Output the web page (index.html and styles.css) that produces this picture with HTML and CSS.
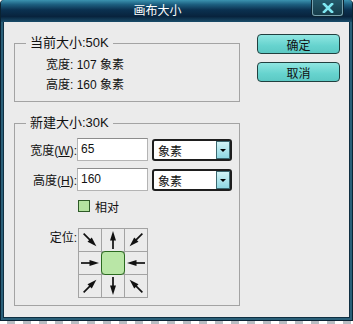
FILE: index.html
```html
<!DOCTYPE html>
<html lang="zh">
<head>
    <meta charset="UTF-8">
    <title>画布大小</title>
    <link rel="stylesheet" href="styles.css">
</head>
<body>
    <svg class="defs" width="0" height="0">
        <defs>
            <g id="arrow">
                <line x1="2" y1="11" x2="13" y2="11" stroke="#111" stroke-width="1.7"/>
                <polygon points="10.5,8 20,11 10.5,14" fill="#111"/>
            </g>
        </defs>
    </svg>

    <div class="window">
        <div class="titlebar">
            <span class="title">画布大小</span>
            <span class="close">
                <svg width="12" height="10" viewBox="0 0 12 10">
                    <path d="M2 1 L10 9 M10 1 L2 9" stroke="#7ee6f0" stroke-width="2.6" stroke-linecap="square"/>
                </svg>
            </span>
        </div>

        <div class="content">
            <div class="main">
                <fieldset class="group current">
                    <legend>当前大小:50K</legend>
                    <div class="line">宽度: 107 象素</div>
                    <div class="line">高度: 160 象素</div>
                </fieldset>

                <fieldset class="group new">
                    <legend>新建大小:30K</legend>
                    <div class="row">
                        <label class="label">宽度(<u>W</u>):</label>
                        <div class="input">65</div>
                        <div class="select">
                            <span class="select-text">象素</span>
                            <span class="drop"><i></i></span>
                        </div>
                    </div>
                    <div class="row second">
                        <label class="label">高度(<u>H</u>):</label>
                        <div class="input">160</div>
                        <div class="select">
                            <span class="select-text">象素</span>
                            <span class="drop"><i></i></span>
                        </div>
                    </div>
                    <div class="check-row">
                        <span class="checkbox"></span>
                        <span>相对</span>
                    </div>
                    <div class="anchor-row">
                        <span class="label">定位:</span>
                        <div class="anchor">
                            <span class="cell"><svg viewBox="0 0 22 22"><use href="#arrow" transform="rotate(45 11 11)"/></svg></span>
                            <span class="cell"><svg viewBox="0 0 22 22"><use href="#arrow" transform="rotate(-90 11 11)"/></svg></span>
                            <span class="cell"><svg viewBox="0 0 22 22"><use href="#arrow" transform="rotate(135 11 11)"/></svg></span>
                            <span class="cell"><svg viewBox="0 0 22 22"><use href="#arrow"/></svg></span>
                            <span class="cell center"><span class="dot"></span></span>
                            <span class="cell"><svg viewBox="0 0 22 22"><use href="#arrow" transform="rotate(180 11 11)"/></svg></span>
                            <span class="cell"><svg viewBox="0 0 22 22"><use href="#arrow" transform="rotate(-45 11 11)"/></svg></span>
                            <span class="cell"><svg viewBox="0 0 22 22"><use href="#arrow" transform="rotate(90 11 11)"/></svg></span>
                            <span class="cell"><svg viewBox="0 0 22 22"><use href="#arrow" transform="rotate(-135 11 11)"/></svg></span>
                        </div>
                    </div>
                </fieldset>
            </div>

            <div class="actions">
                <button class="btn">确定</button>
                <button class="btn">取消</button>
            </div>
        </div>
    </div>
    <div class="checker"></div>
</body>
</html>
```

FILE: styles.css
```css
body {
    margin: 0;
    background: #fff;
    font-family: "Liberation Sans", "Noto Sans CJK SC", sans-serif;
    font-size: 12px;
    color: #111;
}
.defs {
    position: absolute;
}
.window {
    width: 353px;
    height: 321px;
    box-sizing: border-box;
    border: 1px solid #0a2232;
    border-top: none;
    background: #2a5f78;
    border-radius: 4px 4px 0 0;
    display: flex;
    flex-direction: column;
}
.titlebar {
    height: 22px;
    display: flex;
    align-items: flex-start;
    border-radius: 4px 4px 0 0;
    background: linear-gradient(#3b93b0 0%, #1d5f80 20%, #0b3150 45%, #08233d 75%, #1a4d6a 100%);
}
.title {
    flex: 1;
    text-align: center;
    color: #fff;
    font-size: 12px;
    line-height: 22px;
    padding-left: 2px;
}
.close {
    width: 29px;
    height: 15px;
    margin-right: 9px;
    border: 1px solid #78a2ae;
    border-top: none;
    border-radius: 0 0 3px 3px;
    background: linear-gradient(#24596a, #163c4a);
    box-shadow: 0 0 0 1px #0b2430;
    display: flex;
    align-items: center;
    justify-content: center;
}
.content {
    flex: 1;
    margin: 0 2px 2px;
    border: 1px solid #0f2f42;
    border-top: none;
    background: #ebebeb;
    display: flex;
    padding-left: 10px;
}
.main {
    width: 226px;
}
.group {
    margin: 13px 0 0;
    padding: 0;
    min-width: 0;
    border: 1px solid #a3a3a3;
}
.group legend {
    margin-left: 11px;
    padding: 0 4px;
    line-height: 16px;
    font-size: 13px;
}
.current {
    padding: 4px 0 6px;
}
.line {
    line-height: 20px;
    padding-left: 31px;
}
.new {
    padding: 7px 0 7px;
}
.row {
    display: flex;
    align-items: center;
    height: 23px;
}
.row.second {
    margin-top: 7px;
}
.label {
    width: 62px;
    text-align: right;
    flex-shrink: 0;
}
.input {
    width: 71px;
    height: 23px;
    box-sizing: border-box;
    border: 1px solid #b4b4b4;
    border-top-color: #8c8c8c;
    background: #fff;
    padding-left: 3px;
    line-height: 21px;
}
.select {
    width: 80px;
    height: 22px;
    margin-left: 4px;
    margin-top: 1px;
    box-sizing: border-box;
    border: 2px solid #1e1e1e;
    border-radius: 3px;
    background: #fff;
    display: flex;
    align-items: center;
}
.select-text {
    flex: 1;
    padding-left: 4px;
}
.drop {
    width: 14px;
    height: 18px;
    box-sizing: border-box;
    border: 1px solid #3c6870;
    background: linear-gradient(#d2f3f6, #8ed7e2);
    display: flex;
    align-items: center;
    justify-content: center;
}
.drop i {
    border-left: 3px solid transparent;
    border-right: 3px solid transparent;
    border-top: 3px solid #000;
}
.check-row {
    display: flex;
    align-items: center;
    gap: 5px;
    height: 16px;
    margin: 7px 0 0 63px;
}
.checkbox {
    width: 12px;
    height: 12px;
    box-sizing: border-box;
    border: 1px solid #2e5a28;
    background: #b4e3a0;
}
.anchor-row {
    display: flex;
    align-items: flex-start;
    gap: 1px;
    margin-top: 14px;
}
.anchor-row .label {
    line-height: 16px;
    padding-top: 2px;
}
.anchor {
    display: grid;
    grid-template-columns: repeat(3, 22px);
    grid-template-rows: repeat(3, 22px);
    gap: 1px;
    border: 1px solid #a3a3a3;
    background: #a3a3a3;
}
.cell {
    background: #ebebeb;
    display: flex;
}
.cell svg {
    width: 22px;
    height: 22px;
}
.cell.center {
    background: transparent;
}
.dot {
    flex: 1;
    margin: -1px;
    border: 1.5px solid #2b6a20;
    border-radius: 4px;
    background: #b9e6a6;
}
.actions {
    display: flex;
    flex-direction: column;
    gap: 8px;
    margin: 12px 0 0 17px;
}
.btn {
    width: 83px;
    height: 20px;
    padding: 0;
    border: 1px solid #21403f;
    border-radius: 4px;
    background: linear-gradient(#8fe6e1, #66d3ce 60%, #5cc9c4);
    font-family: "Liberation Sans", "Noto Sans CJK SC", sans-serif;
    font-size: 12px;
    color: #111;
}
.checker {
    height: 3px;
    background: repeating-linear-gradient(90deg, #fff 0 7px, #b9bdc3 7px 15px, #fff 15px 16px);
}
```
